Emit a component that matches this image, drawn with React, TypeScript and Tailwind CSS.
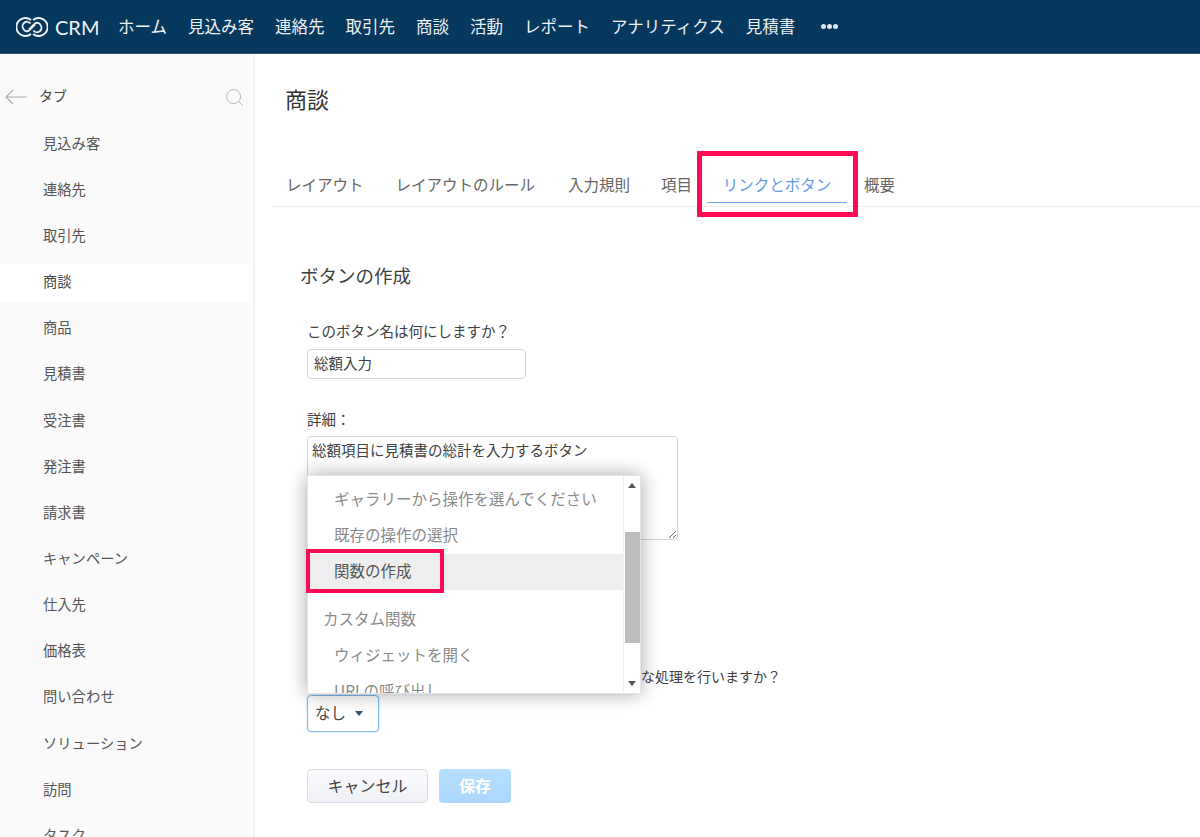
import { Search } from "lucide-react";

const NAV = ["ホーム", "見込み客", "連絡先", "取引先", "商談", "活動", "レポート", "アナリティクス", "見積書"];
const TABS = ["見込み客", "連絡先", "取引先", "商談", "商品", "見積書", "受注書", "発注書", "請求書", "キャンペーン", "仕入先", "価格表", "問い合わせ", "ソリューション", "訪問", "タスク"];
const FONT = "font-['Noto_Sans_CJK_JP','Liberation_Sans',sans-serif]";

const Header = () => (
  <header className="h-[54px] bg-[#06385d] text-[#eef2f5] flex items-center shrink-0 border-b border-[#2d5878]">
    {/* logo */}
    <div className="flex items-center ml-[16px] w-[102px] shrink-0">
      <svg width="32" height="20" viewBox="0 0 32 20" fill="none" stroke="#eef2f5" strokeWidth="1.9">
        <path d="M15 3 A9 9 0 1 0 15 17" />
        <path d="M17 3 A9 9 0 1 1 17 17" />
        <path d="M14.5 6.5 A4.4 4.4 0 0 0 7.5 12 A3.6 3.6 0 0 0 13 13.5 L19 7.5" />
        <path d="M17.5 13.5 A4.4 4.4 0 0 0 24.5 8 A3.6 3.6 0 0 0 19 6.5 L13 12.5" />
      </svg>
      <span className="ml-[7px] text-[20px] font-['Lato',sans-serif]">CRM</span>
    </div>
    <nav className="flex items-center gap-[21px] text-[16.5px] pb-[1px]">
      {NAV.map((n) => (
        <span key={n}>{n}</span>
      ))}
    </nav>
    <div className="ml-[26px] flex gap-[1px] pb-[1px]">
      <span className="w-[5px] h-[5px] rounded-full bg-[#dfe6ec]" />
      <span className="w-[5px] h-[5px] rounded-full bg-[#dfe6ec]" />
      <span className="w-[5px] h-[5px] rounded-full bg-[#dfe6ec]" />
    </div>
  </header>
);

const Sidebar = () => (
  <aside className="w-[255px] shrink-0 bg-[#fafafa] border-r border-[#eeeeee] overflow-hidden">
    <div className="flex items-center h-[40px] mt-[21px] text-[#aaaaaa]">
      <svg width="22" height="16" viewBox="0 0 22 16" fill="none" stroke="#aaaaaa" strokeWidth="1.1" className="ml-[5px] mt-[3px]">
        <path d="M8 1 L1 8 L8 15 M1 8 H22" />
      </svg>
      <span className="ml-[12px] text-[14px] text-[#444444]">タブ</span>
      <Search size={21} strokeWidth={1.1} className="ml-auto mr-[9px] mt-[5px] text-[#b5b5b5]" />
    </div>
    <ul className="mt-[11px] text-[14.3px] text-[#555555] pr-[2px]">
      {TABS.map((t) => (
        <li
          key={t}
          className={`h-[38px] mb-[8.15px] pl-[43px] pb-[5px] flex items-center ${t === "商談" ? "bg-white text-[#444444]" : ""}`}
        >
          {t}
        </li>
      ))}
    </ul>
  </aside>
);

const DropdownMenu = () => (
  <div className="absolute left-0 top-[-220px] w-[334px] h-[219px] bg-white border border-[#e4e4e4] shadow-[0_0_18px_rgba(0,0,0,0.35)] flex overflow-hidden text-[15.5px] text-[#8a8a8a]">
    <ul className="flex-1 pt-[6px] overflow-hidden">
      <li className="h-[36px] pl-[26px] pb-[2px] flex items-center">ギャラリーから操作を選んでください</li>
      <li className="h-[36px] pl-[26px] pb-[2px] flex items-center">既存の操作の選択</li>
      <li className="h-[36px] pl-[26px] pb-[2px] flex items-center bg-[#eeeeee] text-[#555555]">関数の作成</li>
      <li className="h-[36px] mt-[12px] pl-[15px] pb-[2px] flex items-center">カスタム関数</li>
      <li className="h-[36px] pl-[26px] pb-[2px] flex items-center">ウィジェットを開く</li>
      <li className="h-[36px] pl-[26px] pb-[2px] flex items-center">URLの呼び出し</li>
    </ul>
    <div className="w-[17px] shrink-0 bg-white flex flex-col items-center justify-between py-[7px] border-l border-[#f0f0f0]">
      <span className="w-0 h-0 border-x-[4px] border-x-transparent border-b-[5px] border-b-[#555555]" />
      <span className="w-[15px] h-[111px] bg-[#bdbdbd] mt-[5px]" />
      <span className="w-0 h-0 border-x-[4px] border-x-transparent border-t-[5px] border-t-[#555555]" />
    </div>
  </div>
);

const Content = () => (
  <main className="flex-1 relative overflow-hidden">
    <h1 className="ml-[30px] mt-[28px] text-[22px] leading-[33px] text-[#333333]">商談</h1>

    {/* tabs */}
    <div className="ml-[15px] mt-[52px] h-[40px] border-b border-[#eeeeee] flex text-[15.5px] text-[#666666]">
      <span className="ml-[16px] mr-[32px] leading-[34px]">レイアウト</span>
      <span className="mr-[33px] leading-[34px]">レイアウトのルール</span>
      <span className="mr-[31px] leading-[34px]">入力規則</span>
      <span className="mr-[15px] leading-[34px]">項目</span>
      <span className="relative h-[36px] w-[140px] border-b border-[#70a5ef] text-center leading-[34px] text-[#5f9bec]">
        リンクとボタン
        <span className="absolute left-[-10px] top-[-16px] w-[161px] h-[66px] border-[5px] border-[#ff0a54]" />
      </span>
      <span className="ml-[17px] leading-[34px]">概要</span>
    </div>

    {/* form */}
    <section className="pl-[45px] pt-[56px] text-[14.5px] text-[#404040]">
      <h2 className="text-[18.5px] leading-[24px]">ボタンの作成</h2>
      <div className="pl-[7px]">
        <label className="block mt-[33px] leading-[21px]">このボタン名は何にしますか？</label>
        <input
          readOnly
          value="総額入力"
          className="block mt-[8px] w-[219px] h-[30px] pl-[6px] pb-[4px] border border-[#d5d5d5] rounded-[4px] outline-none text-[14.5px] text-[#404040]"
        />
        <label className="block mt-[29px] leading-[21px]">詳細：</label>
        <textarea
          readOnly
          value="総額項目に見積書の総計を入力するボタン"
          className="block mt-[7px] w-[371px] h-[104px] px-[4px] py-[2px] border border-[#d5d5d5] rounded-[4px] outline-none text-[14.5px] text-[#404040]"
        />
        {/* the start of this line is covered by the open menu */}
        <p className="mt-[126px] pl-[334px] text-[14px] leading-[21px] whitespace-nowrap">な処理を行いますか？</p>
        <div className="relative mt-[8px] w-[72px]">
          <DropdownMenu />
          <div className="h-[37px] border border-[#7db9f2] rounded-[4px] shadow-[0_0_2px_rgba(125,185,242,0.7)] flex items-center pl-[7px] pb-[2px] text-[15.5px] text-[#444444] bg-white">
            なし
            <span className="ml-[9px] mt-[1px] w-0 h-0 border-x-[4px] border-x-transparent border-t-[5px] border-t-[#34506a]" />
          </div>
        </div>
        <div className="flex gap-[11px] mt-[37px]">
          <button className="w-[121px] h-[34px] rounded-[4px] border border-[#dcdee6] bg-gradient-to-b from-[#fbfbfd] to-[#eff1f6] pb-[2px] text-[16px] text-[#444444]">
            キャンセル
          </button>
          <button className="w-[72px] h-[34px] rounded-[4px] bg-gradient-to-b from-[#b6e0ff] to-[#acd7fd] pb-[2px] text-[16px] font-bold text-white">
            保存
          </button>
        </div>
      </div>
    </section>

    {/* highlight around the menu item */}
    <span className="absolute left-[51px] top-[495px] w-[138px] h-[44px] border-[4px] border-[#ff0a54]" />
  </main>
);

const App = () => (
  <div className={`h-[837px] w-[1200px] overflow-hidden bg-white flex flex-col ${FONT}`}>
    <Header />
    <div className="flex flex-1 min-h-0">
      <Sidebar />
      <Content />
    </div>
  </div>
);

export default App;
